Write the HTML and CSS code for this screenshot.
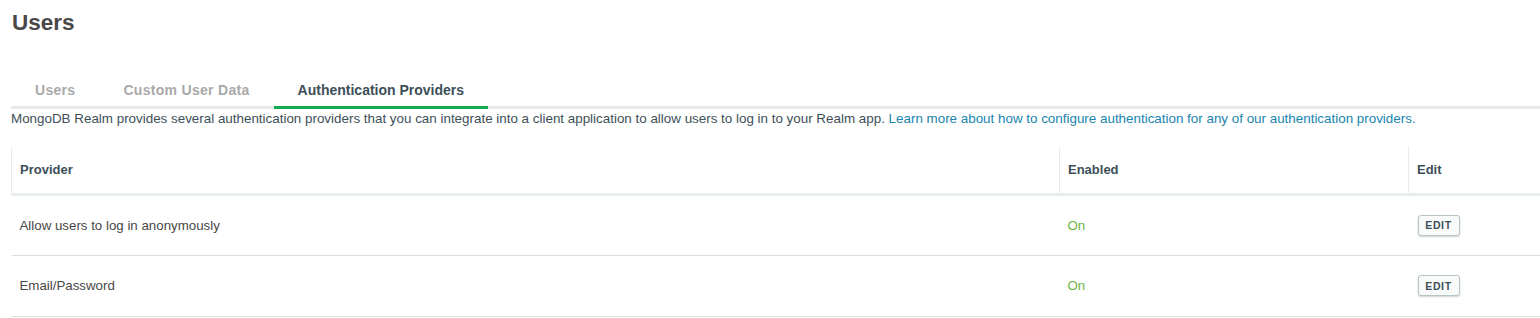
FILE: index.html
```html
<!DOCTYPE html>
<html>
  <head>
    <title>Users</title>
    <link rel="stylesheet" href="styles.css">
  </head>
  <body>
    <div class="page">
      <h1 class="title">Users</h1>

      <div class="tabs">
        <div class="tab">Users</div>
        <div class="tab">Custom User Data</div>
        <div class="tab active">Authentication Providers</div>
      </div>

      <p class="intro">
        MongoDB Realm provides several authentication providers that you can integrate into a client application to allow users to log in to your Realm app.
        <a href="#">Learn more about how to configure authentication for any of our authentication providers.</a>
      </p>

      <table class="providers">
        <thead>
          <tr>
            <th class="col-provider">Provider</th>
            <th class="col-enabled">Enabled</th>
            <th class="col-edit">Edit</th>
          </tr>
        </thead>
        <tbody>
          <tr>
            <td>Allow users to log in anonymously</td>
            <td class="on">On</td>
            <td><button class="edit">EDIT</button></td>
          </tr>
          <tr>
            <td>Email/Password</td>
            <td class="on">On</td>
            <td><button class="edit">EDIT</button></td>
          </tr>
        </tbody>
      </table>
    </div>
  </body>
</html>
```

FILE: styles.css
```css
*,
*:after,
*:before {
  box-sizing: border-box;
  margin: 0;
  padding: 0;
}

html,
body {
  overflow: hidden;
}

body {
  background: #ffffff;
  font-family: "Liberation Sans", Arial, sans-serif;
  color: #3d4f58;
}

.page {
  width: 1640px;
  padding: 10px 0 0 11px;
}

.title {
  font-size: 22.5px;
  font-weight: 700;
  line-height: 26px;
  color: #494747;
  padding-left: 1px;
}

.tabs {
  display: flex;
  margin-top: 45px;
  border-bottom: 3px solid #e8e9ea;
}

.tab {
  font-size: 14px;
  font-weight: 700;
  line-height: 18px;
  padding: 0 24px 7px;
  margin-bottom: -3px;
  border-bottom: 3px solid transparent;
  color: #a9a9a9;
  letter-spacing: 0.3px;
}

.tab.active {
  color: #3d4f58;
  border-bottom-color: #13aa52;
  letter-spacing: 0;
}

.intro {
  font-size: 13.4px;
  line-height: 16px;
  padding-top: 2px;
  color: #3d4f58;
  white-space: nowrap;
}

.intro a {
  color: #1a85ad;
  text-decoration: none;
}

.providers {
  margin-top: 19px;
  border-collapse: collapse;
  table-layout: fixed;
  width: 1629px;
}

.providers th {
  font-size: 13px;
  font-weight: 700;
  text-align: left;
  height: 48px;
  padding: 0 8px;
  color: #3d4f58;
  border-left: 1px solid #e7eeec;
  border-bottom: 3px solid #e7eeec;
}

.col-provider {
  width: 1048px;
}

.col-enabled {
  width: 349px;
}

.providers td {
  font-size: 13.3px;
  height: 61px;
  padding: 0 8px;
  color: #494747;
  border-bottom: 1px solid #dcdcdc;
}

.providers td.on {
  color: #6db33f;
}

.edit {
  font-family: "Liberation Sans", Arial, sans-serif;
  font-size: 10.5px;
  font-weight: 700;
  letter-spacing: 0.6px;
  color: #3d4f58;
  background: #f9fbfa;
  border: 1px solid #b8c4c2;
  border-radius: 3px;
  box-shadow: 0 1px 2px rgba(6, 22, 33, 0.2);
  width: 42px;
  height: 21px;
  margin-left: 1px;
}
```
